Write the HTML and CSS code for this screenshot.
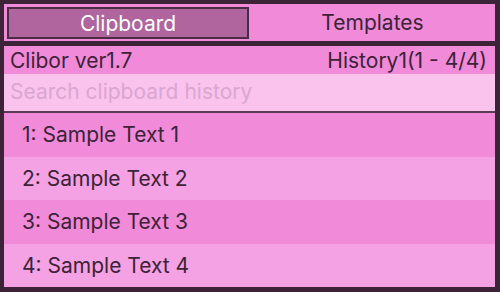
FILE: index.html
```html
<!DOCTYPE html>
<html lang="en">
<head>
  <meta charset="UTF-8">
  <meta name="viewport" content="width=device-width, initial-scale=1.0">
  <title>Clibor</title>
  <link rel="stylesheet" href="styles.css">
</head>
<body>
  <div class="window">
    <div class="tabs">
      <div class="tab tab-active"><span class="tab-inner">Clipboard</span></div>
      <div class="tab">Templates</div>
    </div>
    <div class="info">
      <span>Clibor ver1.7</span>
      <span>History1(1 - 4/4)</span>
    </div>
    <input class="search" type="text" placeholder="Search clipboard history">
    <ul class="list">
      <li class="item">1: Sample Text 1</li>
      <li class="item">2: Sample Text 2</li>
      <li class="item">3: Sample Text 3</li>
      <li class="item">4: Sample Text 4</li>
    </ul>
  </div>
</body>
</html>
```

FILE: styles.css
```css
* {
  padding: 0;
  margin: 0;
  box-sizing: border-box;
}
body {
  background-color: #3c2337;
  font-family: Inter, "Liberation Sans", sans-serif;
  color: #3c2337;
}
.window {
  width: 500px;
  height: 292px;
  padding: 4px 5px 5px 4px;
  display: flex;
  flex-direction: column;
}
.tabs {
  display: flex;
  height: 37px;
  margin-bottom: 5px;
}
.tab {
  flex: 1;
  background-color: #f08ad9;
  font-size: 21px;
  display: flex;
  align-items: center;
  justify-content: center;
}
.tab-active {
  flex: 0 0 246px;
  padding: 3px 1px 2px 3px;
}
.tab-inner {
  width: 100%;
  height: 100%;
  border: 2px solid #4a2c44;
  background-color: #b0659f;
  color: #fff;
  display: flex;
  align-items: center;
  justify-content: center;
}
.info {
  height: 28px;
  background-color: #f08ad9;
  display: flex;
  justify-content: space-between;
  align-items: center;
  padding: 0 8px 0 6px;
  font-size: 21px;
}
.search {
  height: 39px;
  border: none;
  border-bottom: 2px solid #5b3a55;
  background-color: #f9c3ee;
  font-family: inherit;
  font-size: 21px;
  padding: 0 6px 2px;
  outline: none;
}
.search::placeholder {
  color: #dba6d0;
}
.list {
  list-style: none;
  flex: 1;
  display: flex;
  flex-direction: column;
}
.item {
  flex: 1;
  display: flex;
  align-items: center;
  padding-left: 18px;
  font-size: 21px;
  background-color: #f08ad9;
}
.item:nth-child(even) {
  background-color: #f4a2e4;
}
```
